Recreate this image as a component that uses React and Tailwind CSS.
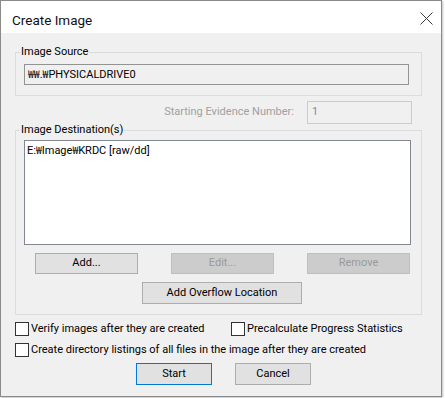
const Button = ({ children, disabled, primary, className = '' }) => (
  <button
    className={`flex items-center justify-center border text-[11px] ${
      disabled
        ? 'bg-[#cccccc] border-[#bfbfbf] text-[#9a9a9a]'
        : primary
        ? 'bg-[#e1e1e1] border-[#0078d7] text-black'
        : 'bg-[#e1e1e1] border-[#adadad] text-black'
    } ${className}`}
  >
    {children}
  </button>
);

const Checkbox = ({ label }) => (
  <label className="flex items-center gap-[2px]">
    <span className="w-[14px] h-[14px] bg-white border border-[#333333]" />
    <span className="text-[11px] leading-[14px] text-black">{label}</span>
  </label>
);

// Korean Windows shows the backslash as a won sign
const Won = () => <span className="font-['Noto_Sans_CJK_KR',sans-serif] text-[10.5px]">₩</span>;

export default function App() {
  return (
    <div className="w-[445px] h-[398px] bg-white" style={{ fontFamily: 'Roboto, "Noto Sans CJK KR", sans-serif' }}>
      <div className="w-[442px] h-[397px] border border-[#8a8a8a] bg-[#f0f0f0] flex flex-col shadow-[1px_1px_2px_rgba(0,0,0,0.25)]">
        {/* Title bar */}
        <div className="h-[32px] bg-white flex items-center justify-between pl-[11px] pr-[8px] pt-[6px]">
          <span className="text-[13.5px] text-[#111111]">Create Image</span>
          <svg width="13" height="13" viewBox="0 0 13 13" className="-mt-[4px]">
            <path d="M0.5 0.5 L12.5 12.5 M12.5 0.5 L0.5 12.5" stroke="#3a3a3a" strokeWidth="1" fill="none" />
          </svg>
        </div>

        {/* Body */}
        <div className="pl-[14px] pt-[11px]">
          <fieldset className="w-[407px] border border-[#dcdcdc] pb-[10px]">
            <legend className="ml-[4px] px-[1px] text-[11px] leading-[16px] text-black">Image Source</legend>
            <div className="mt-[4px] ml-[8px] w-[385px] h-[21px] border border-[#939393] bg-[#f0f0f0] flex items-center pl-[3px] text-[11px] text-black">
              <span>
                <Won />
                <Won />.<Won />PHYSICALDRIVE0
              </span>
            </div>
          </fieldset>

          <div className="w-[407px] mt-[5px] flex items-center justify-end pr-[10px] gap-[13px]">
            <span className="text-[11px] text-[#a0a0a0]">Starting Evidence Number:</span>
            <div className="w-[105px] h-[23px] border border-[#cccccc] bg-[#f0f0f0] flex items-center pl-[4px] text-[11px] text-[#8a8a8a]">
              1
            </div>
          </div>

          <fieldset className="w-[407px] -mt-[2px] border border-[#dcdcdc] pb-[10px]">
            <legend className="ml-[4px] px-[1px] text-[11px] leading-[16px] text-black">Image Destination(s)</legend>
            <div className="mt-[2px] ml-[8px] w-[387px] h-[105px] border border-[#828790] bg-white pl-[2px] pt-[2px] text-[11px] leading-[14px] text-black">
              E:<Won />Image<Won />KRDC [raw/dd]
            </div>
            <div className="mt-[8px] ml-[19px] flex gap-[33px]">
              <Button className="w-[103px] h-[21px]">Add...</Button>
              <Button disabled className="w-[103px] h-[21px]">Edit...</Button>
              <Button disabled className="w-[103px] h-[21px]">Remove</Button>
            </div>
            <div className="mt-[8px] ml-[126px]">
              <Button className="w-[160px] h-[22px]">Add Overflow Location</Button>
            </div>
          </fieldset>

          <div className="mt-[7px] flex">
            <div className="w-[216px]">
              <Checkbox label="Verify images after they are created" />
            </div>
            <Checkbox label="Precalculate Progress Statistics" />
          </div>
          <div className="mt-[7px]">
            <Checkbox label="Create directory listings of all files in the image after they are created" />
          </div>

          <div className="mt-[6px] ml-[121px] flex gap-[23px]">
            <Button primary className="w-[76px] h-[22px]">Start</Button>
            <Button className="w-[76px] h-[22px]">Cancel</Button>
          </div>
        </div>
      </div>
    </div>
  );
}
